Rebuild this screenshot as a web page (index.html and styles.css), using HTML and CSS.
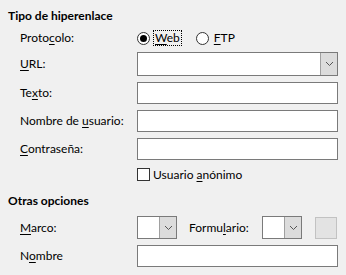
FILE: index.html
```html
<!DOCTYPE html>
<html lang="es">

<head>
  <meta charset="UTF-8">
  <title>Hiperenlace</title>
  <link rel="stylesheet" href="styles.css">
</head>

<body>

  <!-- Tipo de hiperenlace -->
  <h2 class="heading">Tipo de hiperenlace</h2>
  <div class="form">
    <label class="lbl">Proto<u>c</u>olo:</label>
    <div class="radios">
      <span class="radio checked"></span>
      <span class="radio-text focus"><u>W</u>eb</span>
      <span class="radio"></span>
      <span class="radio-text"><u>F</u>TP</span>
    </div>

    <label class="lbl"><u>U</u>RL:</label>
    <div class="combo">
      <span class="combo-field"></span>
      <span class="combo-btn">
        <svg width="9" height="6" viewBox="0 0 9 6"><polyline points="1,1 4.5,4.5 8,1" fill="none" stroke="#555" stroke-width="1"/></svg>
      </span>
    </div>

    <label class="lbl">Te<u>x</u>to:</label>
    <div class="input"></div>

    <label class="lbl">Nombre de <u>u</u>suario:</label>
    <div class="input"></div>

    <label class="lbl"><u>C</u>ontraseña:</label>
    <div class="input"></div>

    <span></span>
    <div class="check-row">
      <span class="checkbox"></span>
      <span>Usuario <u>a</u>nónimo</span>
    </div>
  </div>

  <!-- Otras opciones -->
  <h2 class="heading second">Otras opciones</h2>
  <div class="form form-other">
    <label class="lbl"><u>M</u>arco:</label>
    <div class="options-row">
      <div class="combo small">
        <span class="combo-field"></span>
        <span class="combo-btn">
          <svg width="9" height="6" viewBox="0 0 9 6"><polyline points="1,1 4.5,4.5 8,1" fill="none" stroke="#555" stroke-width="1"/></svg>
        </span>
      </div>
      <label class="lbl form-lbl">Formu<u>l</u>ario:</label>
      <div class="combo small">
        <span class="combo-field"></span>
        <span class="combo-btn">
          <svg width="9" height="6" viewBox="0 0 9 6"><polyline points="1,1 4.5,4.5 8,1" fill="none" stroke="#555" stroke-width="1"/></svg>
        </span>
      </div>
      <span class="square-btn"></span>
    </div>

    <label class="lbl">N<u>o</u>mbre</label>
    <div class="input"></div>
  </div>

</body>

</html>
```
FILE: styles.css
```css
/* General Reset */
* {
  margin: 0;
  padding: 0;
  box-sizing: border-box;
}

body {
  font-family: Lato, sans-serif;
  font-size: 12px;
  color: #000;
  background-color: #f0f0f0;
  padding: 8px 8px 0 8px;
}

u {
  text-underline-offset: 2px;
}

/* Headings */
.heading {
  font-size: 12px;
  font-weight: bold;
  line-height: 16px;
  height: 16px;
  margin-bottom: 6px;
}

.heading.second {
  margin-top: 11px;
  margin-bottom: 7px;
}

/* Form grid */
.form {
  display: grid;
  grid-template-columns: 117px 1fr;
  row-gap: 6px;
  align-items: center;
  padding-left: 12px;
}

.lbl {
  line-height: 16px;
}

/* Radio buttons */
.radios {
  display: flex;
  align-items: center;
  height: 16px;
}

.radio {
  width: 13px;
  height: 13px;
  border: 1px solid #333;
  border-radius: 50%;
  background-color: #fff;
  position: relative;
}

.radio.checked::after {
  content: "";
  position: absolute;
  left: 2px;
  top: 2px;
  width: 7px;
  height: 7px;
  border-radius: 50%;
  background-color: #000;
}

.radio-text {
  height: 16px;
  line-height: 14px;
  padding: 0 1px;
  margin-left: 3px;
  border: 1px solid transparent;
}

.radio-text.focus {
  border: 1px dotted #000;
  margin-right: 14px;
}

/* Text fields */
.input {
  height: 22px;
  background-color: #fff;
  border: 1px solid #7a7a7a;
}

.combo {
  display: flex;
  height: 24px;
  background-color: #fff;
  border: 1px solid #7a7a7a;
}

.combo-field {
  flex: 1;
}

.combo-btn {
  width: 17px;
  display: flex;
  align-items: center;
  justify-content: center;
  background-color: #dcdcdc;
  border-left: 1px solid #a0a0a0;
}

.combo.small {
  width: 40px;
  height: 23px;
}

/* Checkbox */
.check-row {
  display: flex;
  align-items: center;
  height: 16px;
}

.checkbox {
  width: 13px;
  height: 13px;
  border: 1px solid #333;
  background-color: #fff;
  margin-right: 3px;
}

/* Otras opciones */
.options-row {
  display: flex;
  align-items: center;
}

.form-lbl {
  margin-left: 12px;
  width: 73px;
}

.square-btn {
  width: 22px;
  height: 22px;
  margin-left: 13px;
  background-color: #e3e3e3;
  border: 1px solid #c2c2c2;
}
```
